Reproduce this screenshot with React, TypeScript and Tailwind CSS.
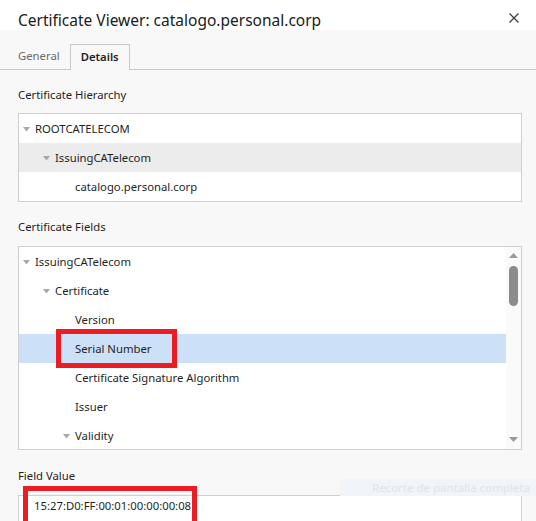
import React from 'react';

type Row = { label: string; level: number; open?: boolean; tone?: 'hover' | 'selected' };

const hierarchy: Row[] = [
  { label: 'ROOTCATELECOM', level: 0, open: true },
  { label: 'IssuingCATelecom', level: 1, open: true, tone: 'hover' },
  { label: 'catalogo.personal.corp', level: 2 },
];

const fields: Row[] = [
  { label: 'IssuingCATelecom', level: 0, open: true },
  { label: 'Certificate', level: 1, open: true },
  { label: 'Version', level: 2 },
  { label: 'Serial Number', level: 2, tone: 'selected' },
  { label: 'Certificate Signature Algorithm', level: 2 },
  { label: 'Issuer', level: 2 },
  { label: 'Validity', level: 2, open: true },
];

const Caret = () => (
  <svg width="7" height="5" viewBox="0 0 7 5" className="shrink-0">
    <polygon points="0,0 7,0 3.5,4.5" fill="#a8a8a8" />
  </svg>
);

const TreeRow = ({ row }: { row: Row }) => {
  const pads = ['pl-[4px]', 'pl-[24px]', 'pl-[44px]'];
  const bg =
    row.tone === 'selected' ? 'bg-[#cce1f7]' : row.tone === 'hover' ? 'bg-[#ececec]' : '';
  return (
    <div className={`h-[29px] pt-[2px] flex items-center ${pads[row.level]} ${bg}`}>
      <div className="w-[12px] flex items-center">{row.open && <Caret />}</div>
      <span className="whitespace-nowrap">{row.label}</span>
    </div>
  );
};

const Label = ({ children, className }: { children: React.ReactNode; className: string }) => (
  <div className={`pl-[18px] pt-[1px] leading-[20px] ${className}`}>{children}</div>
);

const App = () => {
  return (
    <div className="relative w-[536px] h-[521px] overflow-hidden bg-[#f8f8f8] text-[#1f1f1f] text-[11.3px] font-['Noto_Sans',sans-serif]">
      <div className="h-[30px] bg-white flex items-start justify-between pl-[18px] pr-[17px]">
        <div className="mt-[8px] text-[15.5px] leading-[24px] text-[#202020]">
          Certificate Viewer: catalogo.personal.corp
        </div>
        <svg width="10" height="10" viewBox="0 0 10 10" className="mt-[13px]">
          <path d="M0.5 0.5 L9.5 9.5 M9.5 0.5 L0.5 9.5" stroke="#3c3c3c" strokeWidth="1.3" />
        </svg>
      </div>

      <div className="mt-[14px] h-[26px] border-b border-[#c9c9c9] flex items-end pl-[18px]">
        <div className="h-[25px] flex items-center text-[#6b6b6b] mr-[10px]">General</div>
        <div className="h-[26px] -mb-px flex items-center px-[10px] border border-b-0 border-[#c9c9c9] bg-[#f8f8f8] font-semibold">
          Details
        </div>
      </div>

      <Label className="mt-[14px]">Certificate Hierarchy</Label>
      <div className="mt-[8px] ml-[18px] w-[504px] h-[89px] border border-[#cfcfcf] bg-white">
        {hierarchy.map((r) => (
          <TreeRow key={r.label} row={r} />
        ))}
      </div>

      <Label className="mt-[14px]">Certificate Fields</Label>
      <div className="mt-[9px] ml-[18px] w-[504px] h-[204px] border border-[#cfcfcf] bg-white flex overflow-hidden">
        <div className="flex-1">
          {fields.map((r) => (
            <TreeRow key={r.label} row={r} />
          ))}
        </div>
        <div className="w-[15px] bg-[#fafafa] flex flex-col items-center pt-[6px]">
          <svg width="9" height="5" viewBox="0 0 9 5">
            <polygon points="0,5 9,5 4.5,0" fill="#9a9a9a" />
          </svg>
          <div className="mt-[8px] w-[9px] h-[40px] rounded-full bg-[#8c8c8c]" />
          <div className="flex-1" />
          <svg width="9" height="5" viewBox="0 0 9 5" className="mb-[7px]">
            <polygon points="0,0 9,0 4.5,5" fill="#9a9a9a" />
          </svg>
        </div>
      </div>

      <Label className="mt-[15px]">Field Value</Label>
      <div className="mt-[9px] ml-[18px] w-[504px] h-[40px] border border-[#cfcfcf] bg-white pl-[15px] pt-[1px] leading-[18px]">
        15:27:D0:FF:00:01:00:00:00:08
      </div>

      <div className="absolute left-[340px] top-[479px] w-[196px] h-[17px] bg-[#f1f4f8] flex items-center pl-[32px] text-[11.5px] text-[#dfe4ea] whitespace-nowrap">
        Recorte de pantalla completa
      </div>

      <div className="absolute left-[56px] top-[329px] w-[121px] h-[39px] border-[5px] border-[#ec1c24]" />
      <div className="absolute left-[23px] top-[486px] w-[174px] h-[45px] border-[5px] border-[#ec1c24]" />
    </div>
  );
};

export default App;
